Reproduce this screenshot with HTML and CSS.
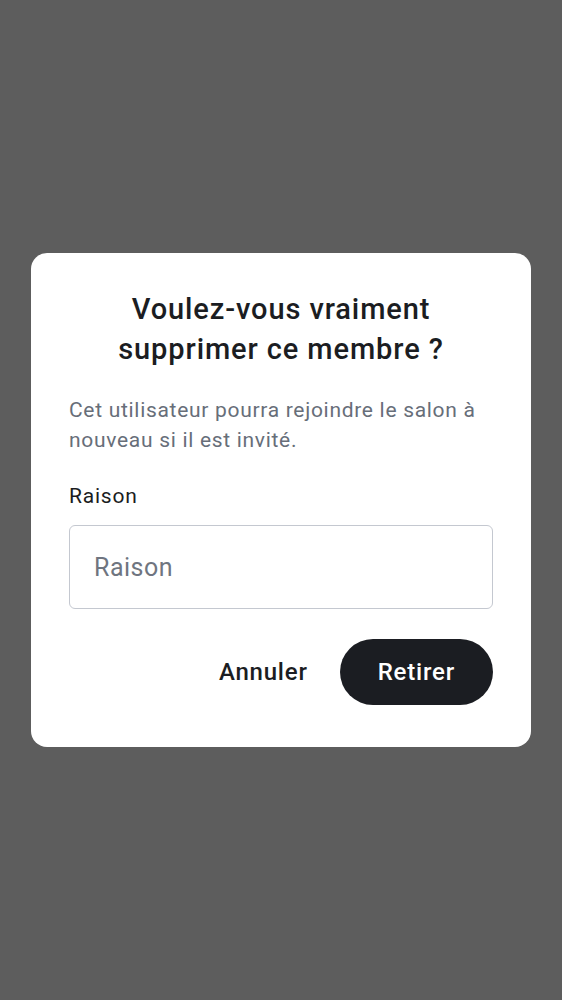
FILE: index.html
```html
<!DOCTYPE html>
<html lang="fr">
<head>
<meta charset="utf-8">
<link rel="stylesheet" href="styles.css">
</head>
<body>
<div class="overlay">
  <div class="dialog">
    <h1 class="title">Voulez-vous vraiment supprimer ce membre ?</h1>
    <p class="desc">Cet utilisateur pourra rejoindre le salon à nouveau si il est invité.</p>
    <label class="label" for="reason">Raison</label>
    <input class="input" id="reason" type="text" placeholder="Raison">
    <div class="actions">
      <button class="btn btn-text">Annuler</button>
      <button class="btn btn-primary">Retirer</button>
    </div>
  </div>
</div>
</body>
</html>
```
FILE: styles.css
```css
html, body {
  margin: 0;
  padding: 0;
}
body {
  font-family: Roboto, "Noto Sans", sans-serif;
  background: #5d5d5d;
}
.overlay {
  height: 1000px;
  display: flex;
  align-items: center;
  justify-content: center;
}
.dialog {
  width: 500px;
  box-sizing: border-box;
  background: #ffffff;
  border-radius: 16px;
  padding: 36px 38px 42px;
  display: flex;
  flex-direction: column;
}
.title {
  margin: 0 0 26px;
  text-align: center;
  font-size: 29px;
  line-height: 40px;
  font-weight: 500;
  letter-spacing: 0.9px;
  color: #1b1d22;
  padding: 0 20px;
}
.desc {
  margin: 0 0 26px;
  font-size: 21px;
  line-height: 30px;
  letter-spacing: 0.7px;
  color: #676e79;
}
.label {
  font-size: 21px;
  line-height: 30px;
  letter-spacing: 0.8px;
  color: #1b1d22;
  margin-bottom: 14px;
}
.input {
  height: 84px;
  box-sizing: border-box;
  border: 1.5px solid #c4c8d0;
  border-radius: 6px;
  padding: 0 24px;
  font-family: inherit;
  font-size: 25px;
  letter-spacing: 0.5px;
  color: #1b1d22;
  outline: none;
}
.input::placeholder {
  color: #6f7580;
}
.actions {
  margin-top: 30px;
  display: flex;
  justify-content: flex-end;
  align-items: center;
  gap: 16px;
}
.btn {
  font-family: inherit;
  font-size: 24px;
  font-weight: 500;
  letter-spacing: 0.8px;
  border: none;
  height: 66px;
  border-radius: 33px;
  padding: 0 38px;
  cursor: pointer;
}
.btn-text {
  background: transparent;
  color: #1b1d22;
  padding: 0 16px;
}
.btn-primary {
  background: #1b1d22;
  color: #ffffff;
}
```
